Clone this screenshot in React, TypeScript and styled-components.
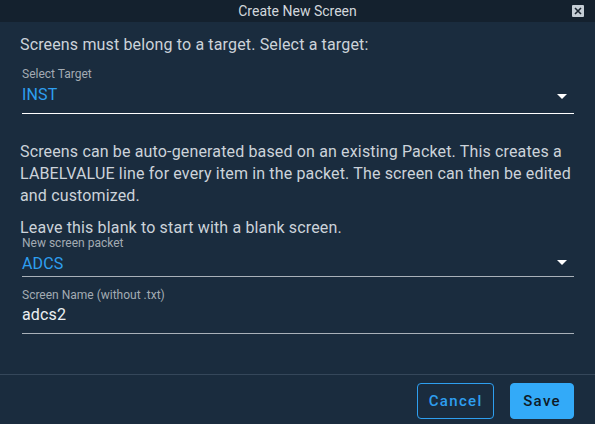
import React from "react";
import styled, { createGlobalStyle } from "styled-components";

const GlobalStyle = createGlobalStyle`
  html, body {
    margin: 0;
    padding: 0;
    background: #1a2c3e;
  }
  body {
    font-family: Roboto, "Liberation Sans", sans-serif;
  }
`;

const Dialog = styled.div`
  width: 595px;
  height: 424px;
  background: #1a2c3e;
  display: flex;
  flex-direction: column;
  overflow: hidden;
`;

const TitleBar = styled.div`
  height: 22px;
  background: #14212e;
  display: flex;
  align-items: center;
  justify-content: center;
  position: relative;
  color: #d2d7dc;
  font-size: 14px;
`;

const CloseBox = styled.div`
  position: absolute;
  right: 11px;
  top: 5px;
  width: 12px;
  height: 12px;
  border-radius: 1px;
  background: #c5ced6;
  display: flex;
  align-items: center;
  justify-content: center;
`;

const Content = styled.div`
  flex: 1;
  padding: 12px 21px 0 20px;
  display: flex;
  flex-direction: column;
`;

const Text = styled.p<{ $mt?: number }>`
  margin: ${(p) => p.$mt ?? 0}px 0 0 0;
  font-size: 16px;
  line-height: 22px;
  letter-spacing: 0.15px;
  color: #ccd3da;
`;

const Field = styled.div<{ $mt: number; $focused?: boolean; $pb: number }>`
  margin: ${(p) => p.$mt}px 0 0 2px;
  padding-bottom: ${(p) => p.$pb}px;
  border-bottom: 1px solid ${(p) => (p.$focused ? "#ffffff" : "#a9b1b9")};
  position: relative;
`;

const Label = styled.div<{ $gap: number }>`
  font-size: 12px;
  line-height: 16px;
  color: #a3abb3;
  margin-bottom: ${(p) => p.$gap}px;
`;

const Value = styled.div<{ $select?: boolean }>`
  font-size: 16px;
  line-height: 22px;
  letter-spacing: 0.15px;
  color: ${(p) => (p.$select ? "#2e9ff0" : "#eceff2")};
`;

const Arrow = styled.div<{ $bottom: number }>`
  position: absolute;
  right: 7px;
  bottom: ${(p) => p.$bottom}px;
  width: 0;
  height: 0;
  border-left: 5px solid transparent;
  border-right: 5px solid transparent;
  border-top: 5px solid #ffffff;
`;

const Footer = styled.div`
  border-top: 1px solid #35475a;
  height: 41px;
  padding: 8px 21px 0 0;
  display: flex;
  justify-content: flex-end;
  align-items: flex-start;
  gap: 16px;
`;

const Button = styled.button<{ $primary?: boolean }>`
  height: 36px;
  padding: 0 ${(p) => (p.$primary ? 12 : 10.5)}px;
  border-radius: 4px;
  font-family: Roboto, "Liberation Sans", sans-serif;
  font-size: 15px;
  font-weight: 500;
  letter-spacing: 0.09em;
  cursor: pointer;
  border: 1px solid ${(p) => (p.$primary ? "#33aaf8" : "#2e9ff0")};
  background: ${(p) => (p.$primary ? "#33aaf8" : "transparent")};
  color: ${(p) => (p.$primary ? "#0e1a26" : "#2e9ff0")};
`;

export default function App() {
  return (
    <>
      <GlobalStyle />
      <Dialog>
        <TitleBar>
          Create New Screen
          <CloseBox>
            <svg width="8" height="8" viewBox="0 0 8 8">
              <path d="M1 1L7 7M7 1L1 7" stroke="#1a2530" strokeWidth="1.6" />
            </svg>
          </CloseBox>
        </TitleBar>
        <Content>
          <Text>Screens must belong to a target. Select a target:</Text>
          <Field $mt={10} $pb={7} $focused>
            <Label $gap={2}>Select Target</Label>
            <Value $select>INST</Value>
            <Arrow $bottom={14} />
          </Field>
          <Text $mt={27}>
            Screens can be auto-generated based on an existing Packet. This creates a
            LABELVALUE line for every item in the packet. The screen can then be edited
            and customized.
          </Text>
          <Text $mt={10}>Leave this blank to start with a blank screen.</Text>
          <Field $mt={-4} $pb={1}>
            <Label $gap={2}>New screen packet</Label>
            <Value $select>ADCS</Value>
            <Arrow $bottom={11} />
          </Field>
          <Field $mt={10} $pb={7}>
            <Label $gap={1}>Screen Name (without .txt)</Label>
            <Value>adcs2</Value>
          </Field>
        </Content>
        <Footer>
          <Button>Cancel</Button>
          <Button $primary>Save</Button>
        </Footer>
      </Dialog>
    </>
  );
}
